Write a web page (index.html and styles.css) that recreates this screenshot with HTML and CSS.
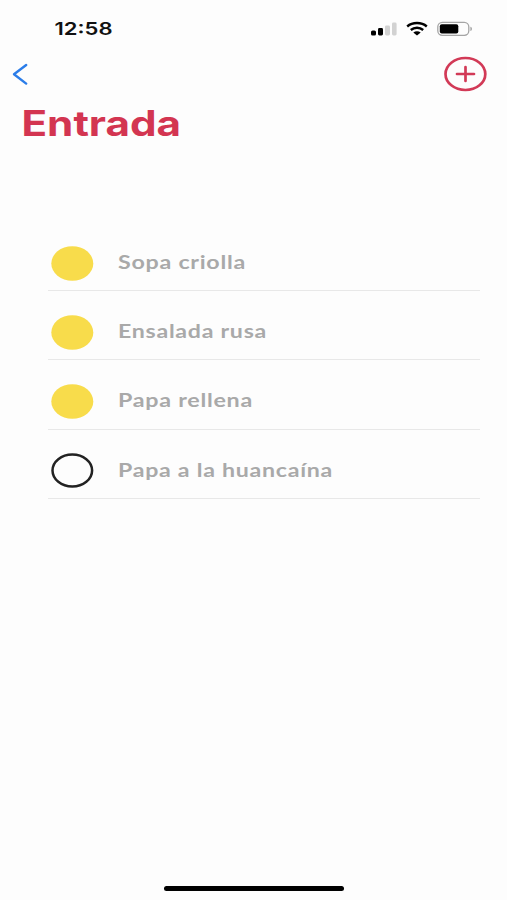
FILE: index.html
```
<!DOCTYPE html>
<html lang="es">
<head>
<meta charset="utf-8">
<meta name="viewport" content="width=device-width">
<title>Entrada</title>
<link rel="stylesheet" href="styles.css">
</head>
<body>
<div class="screen">
  <header class="status">
    <svg class="time" width="60" height="24"><text x="0.5" y="18" textLength="58" lengthAdjust="spacingAndGlyphs">12:58</text></svg>
    <div class="indicators">
      <svg width="26" height="16" viewBox="0 0 26 16">
        <rect x="0" y="9.5" width="5" height="5" rx="1.6"/>
        <rect x="7" y="7" width="5" height="7.5" rx="1.4"/>
        <rect class="dim" x="14" y="4.5" width="5" height="10" rx="1.4"/>
        <rect class="dim" x="21" y="1.5" width="4.6" height="13" rx="1.4"/>
      </svg>
      <svg width="22" height="16" viewBox="0 0 22 16">
        <path class="wave" d="M1.2 5.5C6.5.9 15.5.9 20.8 5.5M4.8 9c3.6-3.1 8.8-3.1 12.4 0"/>
        <path d="M7.3 11.5c2.2-1.7 5.2-1.7 7.4 0L11 14.6z"/>
      </svg>
      <svg width="36" height="16" viewBox="0 0 36 16">
        <rect class="shell" x=".8" y="1.3" width="31" height="13" rx="4.5"/>
        <rect x="2.8" y="3.3" width="18.5" height="9.2" rx="2"/>
        <path class="tip" d="M33.5 5.8c1.7.5 1.7 3.700 0 4.200z"/>
      </svg>
    </div>
  </header>
  <nav class="nav">
    <svg width="18" height="24" viewBox="0 0 18 24"><path class="back" d="M14.2 3 2 12.3l12.2 9.3"/></svg>
    <svg width="44" height="36" viewBox="0 0 44 36">
      <ellipse class="add" cx="22.4" cy="18" rx="19.9" ry="16"/>
      <path class="add" d="M14 18h17M22.5 11v14"/>
    </svg>
  </nav>
  <h1 class="title"><svg width="164" height="40"><text x="0.5" y="32" textLength="159.5" lengthAdjust="spacingAndGlyphs">Entrada</text></svg></h1>
  <ul class="list">
    <li class="row"><svg class="mark done" width="42" height="35"><ellipse cx="21.300" cy="17.500" rx="21" ry="17.200"/></svg><svg width="300" height="30"><text x="0" y="21" textLength="128" lengthAdjust="spacingAndGlyphs">Sopa criolla</text></svg></li>
    <li class="row"><svg class="mark done" width="42" height="35"><ellipse cx="21.300" cy="17.500" rx="21" ry="17.200"/></svg><svg width="300" height="30"><text x="0" y="21" textLength="149" lengthAdjust="spacingAndGlyphs">Ensalada rusa</text></svg></li>
    <li class="row"><svg class="mark done" width="42" height="35"><ellipse cx="21.300" cy="17.500" rx="21" ry="17.200"/></svg><svg width="300" height="30"><text x="0" y="21" textLength="135" lengthAdjust="spacingAndGlyphs">Papa rellena</text></svg></li>
    <li class="row"><svg class="mark" width="42" height="35"><ellipse cx="21.300" cy="17.500" rx="19.800" ry="16"/></svg><svg width="300" height="30"><text x="0" y="21" textLength="215" lengthAdjust="spacingAndGlyphs">Papa a la huancaína</text></svg></li>
  </ul>
  <div class="home"></div>
</div>
</body>
</html>
```
FILE: styles.css
```
* { box-sizing: border-box; }
body { margin: 0; background: #fdfdfd; }
svg { display: block; flex: none; overflow: visible; }
.screen {
  display: flex;
  flex-direction: column;
  height: 900px;
  padding-bottom: 9px;
}
.status {
  display: flex;
  justify-content: space-between;
  height: 56px;
  padding: 17px 34px 0 54px;
}
.time { font: 600 17.5px Inter, sans-serif; fill: #111; }
.indicators { display: flex; gap: 9px; padding-top: 4px; }
.dim { fill: #d2d2d2; }
.wave { fill: none; stroke: #000; stroke-width: 2.4; }
.shell { fill: none; stroke: #a5a5a5; stroke-width: 1.3; }
.tip { fill: #8c8c8c; }
.nav {
  display: flex;
  justify-content: space-between;
  align-items: center;
  height: 36px;
  padding: 0 20px 0 12px;
}
.back {
  fill: none;
  stroke: #2b7de9;
  stroke-width: 2.4;
  stroke-linecap: round;
  stroke-linejoin: round;
}
.add { fill: none; stroke: #d23a57; stroke-width: 2.7; stroke-linecap: round; }
.title {
  margin: 12px 0 0 21px;
  font: 700 35px Inter, sans-serif;
  fill: #d33551;
}
.list {
  margin: 78px 27px 0 48px;
  padding: 0;
  list-style: none;
  font: 700 19px Lato, sans-serif;
  letter-spacing: 0.6px;
  fill: #a9a9a9;
}
.row {
  display: flex;
  align-items: center;
  gap: 24.5px;
  height: 69.2px;
  padding: 14px 0 0 3px;
  border-bottom: 1px solid #e8e8e8;
}
.mark { fill: none; stroke: #222; stroke-width: 2.5; }
.done { fill: #f8dc4b; stroke: none; }
.home {
  width: 180px;
  height: 5px;
  margin: auto auto 0 164px;
  border-radius: 3px;
  background: #000;
}
```
